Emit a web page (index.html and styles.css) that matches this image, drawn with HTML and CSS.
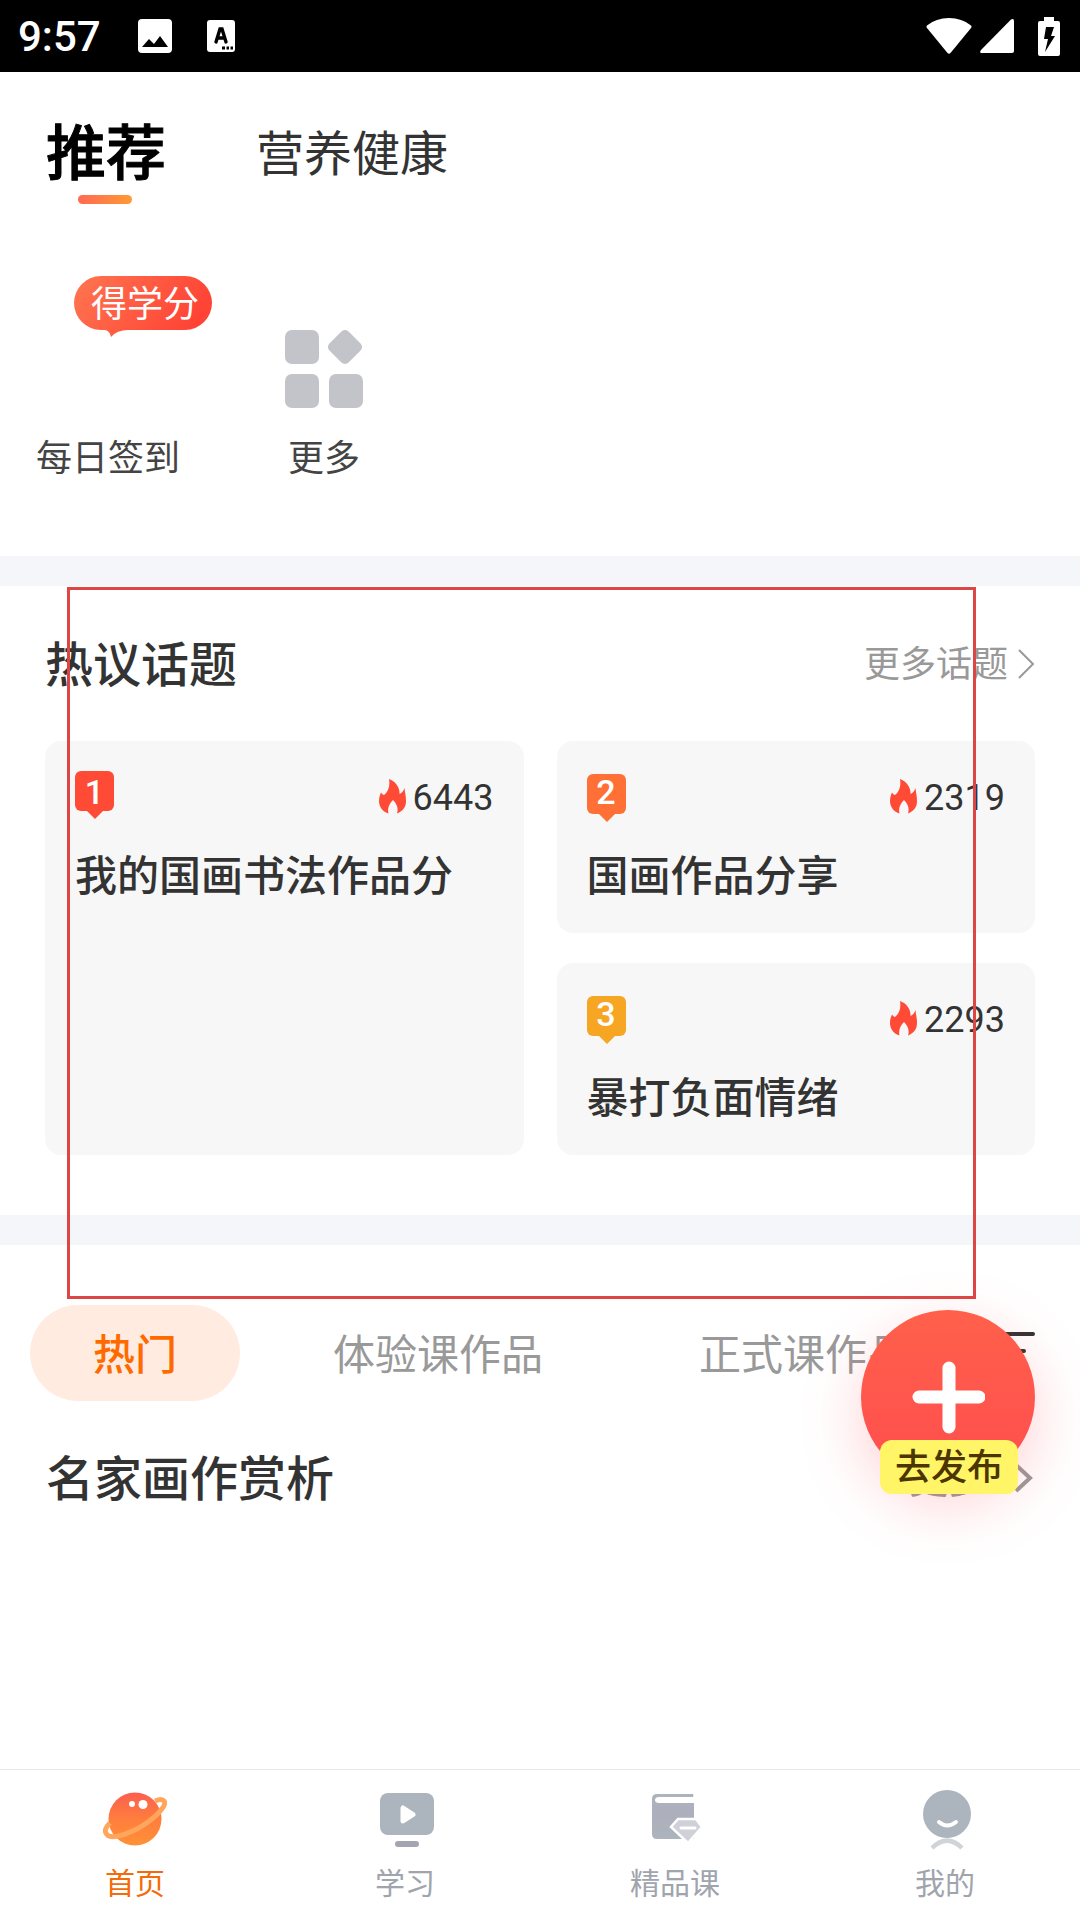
FILE: index.html
```html
<!DOCTYPE html>
<html lang="zh-CN">
<head>
<meta charset="utf-8">
<meta name="viewport" content="width=device-width, initial-scale=1">
<title>推荐</title>
<link rel="stylesheet" href="styles.css">
</head>
<body>
<header class="status">
  <span class="clock">9:57</span>
  <svg class="status-icon" width="34" height="34" viewBox="0 0 34 34"><rect width="34" height="34" rx="4" fill="#fff"/><path d="M4 28L11 20L16 25L22 17L30 28Z" fill="#000"/></svg>
  <svg class="status-icon keyboard" width="28" height="32" viewBox="0 0 28 32"><rect width="28" height="32" rx="3" fill="#fff"/><path d="M9 22L13 9H15L19 22M10.500 18H17.500" fill="none" stroke="#000" stroke-width="3.400" stroke-linecap="round"/><path d="M15 28H18M19.500 28H22M23.500 28H26" stroke="#000" stroke-width="3"/></svg>
  <span class="status-right">
    <svg width="46" height="36" viewBox="0 0 46 36"><path d="M1 7.500Q10 0 23 0T45 7.500Q46 8.500 45 10L24.500 35Q23 36.500 21.500 35L1 10Q0 8.500 1 7.500Z" fill="#fff"/></svg>
    <svg class="signal" width="34" height="34" viewBox="0 0 34 34"><path d="M31 .500Q34-1 34 2V32Q34 34 32 34H1.500Q-1 34 1 31Z" fill="#fff"/></svg>
    <svg class="battery" width="22" height="39" viewBox="0 0 22 39"><path d="M6 0H16V4H20Q22 4 22 6V37Q22 39 20 39H2Q0 39 0 37V6Q0 4 2 4H6Z" fill="#fff"/><path d="M8 10H16L13 19H17L7 35L10 22H6Z" fill="#000"/></svg>
  </span>
</header>
<nav class="channels">
  <a class="channel active" href="#recommend">推荐</a>
  <a class="channel" href="#health">营养健康</a>
</nav>
<main class="content">
  <section class="shortcuts">
    <a class="shortcut" href="#checkin"><span class="shortcut-icon"></span><span>每日签到</span>
      <span class="bubble"><svg class="bubble-shape" width="138" height="61" viewBox="0 0 138 61"><defs><linearGradient id="bubble" x1="0" x2="1" y1="0" y2=".3"><stop offset="0" stop-color="#ff7650"/><stop offset="1" stop-color="#ff4436"/></linearGradient></defs><path d="M27 0H111A27 27 0 0 1 111 54H54Q43 54 37 61Q36 55 31 54H27A27 27 0 0 1 27 0Z" fill="url(#bubble)"/></svg><span class="bubble-text">得学分</span></span>
    </a>
    <a class="shortcut" href="#more"><span class="shortcut-icon"><svg width="78" height="78" viewBox="0 0 78 78" fill="#c3c3ca"><rect width="34" height="34" rx="7"/><rect y="44" width="34" height="34" rx="7"/><rect x="44" y="44" width="34" height="34" rx="7"/><rect x="46.500" y="3.500" width="27" height="27" rx="5" transform="rotate(45 60 17)"/></svg></span><span>更多</span></a>
  </section>
  <section class="topics">
    <div class="section-head">
      <h2>热议话题</h2>
      <a class="more" href="#topics">更多话题<svg width="17" height="30" viewBox="0 0 17 30"><path d="M1 1L15 15L1 29" fill="none" stroke="#999" stroke-width="2"/></svg></a>
    </div>
    <div class="topic-grid">
      <a class="card card-tall" href="#topic1">
        <span class="card-top"><span class="rank rank-1">1</span><span class="heat"><svg width="27" height="36" viewBox="0 0 27 36"><path d="M10 0C16 2 21 8 20.500 15C23 14 24.500 12 25.500 9C26 14 27 17 27 22C27 28 24 32 18 34.500C20 29 17 24 14 21C11 24 8 29 9.500 34.500C4 33 0 28 0 22C0 18 1 16 2 13.500C3 15 4 16 5 16C10 12 11 6 10 0Z" fill="#ff4b36"/></svg>6443</span></span>
        <strong>我的国画书法作品分</strong>
      </a>
      <a class="card" href="#topic2">
        <span class="card-top"><span class="rank rank-2">2</span><span class="heat"><svg width="27" height="36" viewBox="0 0 27 36"><path d="M10 0C16 2 21 8 20.500 15C23 14 24.500 12 25.500 9C26 14 27 17 27 22C27 28 24 32 18 34.500C20 29 17 24 14 21C11 24 8 29 9.500 34.500C4 33 0 28 0 22C0 18 1 16 2 13.500C3 15 4 16 5 16C10 12 11 6 10 0Z" fill="#ff4b36"/></svg>2319</span></span>
        <strong>国画作品分享</strong>
      </a>
      <a class="card" href="#topic3">
        <span class="card-top"><span class="rank rank-3">3</span><span class="heat"><svg width="27" height="36" viewBox="0 0 27 36"><path d="M10 0C16 2 21 8 20.500 15C23 14 24.500 12 25.500 9C26 14 27 17 27 22C27 28 24 32 18 34.500C20 29 17 24 14 21C11 24 8 29 9.500 34.500C4 33 0 28 0 22C0 18 1 16 2 13.500C3 15 4 16 5 16C10 12 11 6 10 0Z" fill="#ff4b36"/></svg>2293</span></span>
        <strong>暴打负面情绪</strong>
      </a>
    </div>
    <div class="frame"></div>
  </section>
  <section class="works">
    <div class="filters">
      <button class="filter selected" type="button">热门</button>
      <button class="filter" type="button">体验课作品</button>
      <button class="filter" type="button">正式课作品</button>
      <button class="menu" type="button" aria-label="筛选"><svg width="42" height="40" viewBox="0 0 42 40"><path d="M2 3H40M2 20H31M2 37H22" stroke="#333" stroke-width="4" stroke-linecap="round"/></svg></button>
    </div>
    <div class="section-head works-head">
      <h2>名家画作赏析</h2>
      <a class="more works-more" href="#works">更多<svg width="21" height="30" viewBox="0 0 21 30"><path d="M2 2L16 15L2 28" fill="none" stroke="#999" stroke-width="4"/></svg></a>
    </div>
  </section>
</main>
<button class="publish" type="button">
  <svg width="74" height="74" viewBox="0 0 74 74"><path d="M38 8V67M8 37H68" stroke="#fff" stroke-width="13" stroke-linecap="round"/></svg>
  <span class="publish-label">去发布</span>
</button>
<nav class="tabbar">
  <a class="tab current" href="#home">
    <svg width="64" height="60" viewBox="0 0 64 60"><defs><linearGradient id="planet" x1="0" x2="0" y1="0" y2="1"><stop offset="0" stop-color="#fb5f50"/><stop offset=".5" stop-color="#ff7d3d"/><stop offset="1" stop-color="#ff9137"/></linearGradient></defs><circle cx="32" cy="29" r="26.500" fill="url(#planet)"/><path d="M52 11C61 7 65 12 58 20C52 28 38 38 27 42C16 47 5 49 3 43C1 40 4 36 7 33" fill="none" stroke="#ffa55c" stroke-width="5"/><circle cx="29" cy="14" r="3" fill="#fff"/><circle cx="40" cy="14.500" r="4.500" fill="#fff"/></svg>
    首页</a>
  <a class="tab" href="#study">
    <svg width="64" height="60" viewBox="0 0 64 60"><rect x="7" y="3" width="54" height="42" rx="8" fill="#acb4bd"/><path d="M30 18V31L40 24.500Z" fill="#fff" stroke="#fff" stroke-width="5" stroke-linejoin="round"/><rect x="22" y="51" width="24" height="6" rx="3" fill="#a3a5b1"/></svg>
    学习</a>
  <a class="tab" href="#courses">
    <svg width="64" height="60" viewBox="0 0 64 60"><defs><linearGradient id="book" x1="0" x2="0" y1="0" y2="1"><stop offset="0" stop-color="#acb4bd"/><stop offset=".4" stop-color="#adafbc"/><stop offset="1" stop-color="#acb4bd"/></linearGradient></defs><path d="M14 4H50Q51 5.500 50 7H16Q12 7 12 10Q12 13 16 13H51V49H14Q9 49 9 44V9Q9 4 14 4Z" fill="url(#book)"/><path d="M35 29H53L59 37L45 53L28 37Z" fill="#d0d1d8" stroke="#fff" stroke-width="2.500"/><path d="M38 38H52" stroke="#fff" stroke-width="3" stroke-linecap="round"/></svg>
    精品课</a>
  <a class="tab" href="#me">
    <svg width="64" height="60" viewBox="0 0 64 60"><circle cx="34" cy="24" r="24" fill="#acb4bd"/><path d="M26 32Q34 39 43 32" fill="none" stroke="#fff" stroke-width="4" stroke-linecap="round"/><path d="M19 58Q34 43 49 58" fill="none" stroke="#d0d3d8" stroke-width="4.500"/></svg>
    我的</a>
</nav>
</body>
</html>
```

FILE: styles.css
```css
* { box-sizing: border-box; }
body {
  margin: 0;
  min-height: 100vh;
  display: flex;
  flex-direction: column;
  background: #fff;
  color: #333;
  font-family: Roboto, "Noto Sans CJK SC", sans-serif;
  font-size: 36px;
}
a { color: inherit; text-decoration: none; }
button { border: 0; padding: 0; background: none; color: inherit; font: inherit; }
svg { display: block; flex: none; }
h2 { margin: 0; font-size: 48px; line-height: 72px; font-weight: 500; }

.status {
  height: 72px;
  padding: 0 20px 0 18px;
  display: flex;
  align-items: center;
  background: #000;
}
.clock { color: #fff; font-size: 42px; font-weight: 500; margin-right: 37px; }
.keyboard { margin-left: 35px; }
.status-right { margin-left: auto; display: flex; align-items: center; }
.signal { margin-left: 8px; }
.battery { margin-left: 24px; }

.channels {
  height: 162px;
  padding: 4px 46px 0;
  display: flex;
  align-items: center;
  gap: 90px;
}
.channel { font-size: 48px; line-height: 72px; }
.channel.active {
  position: relative;
  font-size: 60px;
  font-weight: 500;
  -webkit-text-stroke: 1px currentColor;
  color: #000;
}
.channel.active::after {
  content: "";
  position: absolute;
  left: 32px;
  bottom: -13px;
  width: 54px;
  height: 9px;
  border-radius: 5px;
  background: linear-gradient(90deg, #ff6952, #ff9a35);
}

.content { flex: 1; }
.shortcuts {
  display: grid;
  grid-template-columns: repeat(5, 1fr);
  padding: 93px 0 70px;
  border-bottom: 30px solid #f5f6fa;
}
.shortcut {
  position: relative;
  display: flex;
  flex-direction: column;
  align-items: center;
  gap: 21px;
  line-height: 54px;
  color: #444;
}
.shortcut-icon { height: 84px; display: grid; place-items: center; }
.bubble { position: absolute; left: 74px; top: -51px; color: #fff; }
.bubble-text { position: absolute; left: 0; top: 2px; width: 142px; text-align: center; }

.topics { position: relative; padding: 44px 45px 60px; border-bottom: 30px solid #f5f6fa; }
.section-head { display: flex; align-items: center; justify-content: space-between; }
.more { display: flex; align-items: center; gap: 10px; color: #999; line-height: 54px; margin-bottom: 2px; }
.more svg { margin-bottom: 3px; }
.topic-grid {
  margin-top: 39px;
  display: grid;
  grid-template-columns: 1fr 1fr;
  gap: 30px 33px;
}
.card {
  height: 192px;
  padding: 30px;
  border-radius: 16px;
  background: #f7f7f7;
}
.card-tall { grid-row: span 2; height: auto; }
.card-top { display: flex; justify-content: space-between; align-items: center; height: 54px; }
.card strong {
  display: block;
  margin-top: 20px;
  font-size: 42px;
  line-height: 63px;
  font-weight: 500;
}
.heat { display: flex; align-items: center; gap: 7px; line-height: 54px; }
.heat svg { margin-bottom: 3px; }
.rank {
  position: relative;
  width: 39px;
  height: 40px;
  margin-bottom: 8px;
  border-radius: 6px;
  background: var(--rank);
  color: #fff;
  font-size: 34px;
  line-height: 36px;
  font-weight: 500;
  text-align: center;
}
.rank::after {
  content: "";
  position: absolute;
  left: 12px;
  top: 40px;
  border: 8px solid transparent;
  border-top-color: var(--rank);
  border-bottom: 0;
}
.rank-1 { --rank: #ff4b36; margin-bottom: 14px; line-height: 42px; }
.rank-2 { --rank: #ff7036; }
.rank-3 { --rank: #f6a623; }
.frame {
  position: absolute;
  z-index: 1;
  top: 1px;
  bottom: -84px;
  left: 67px;
  right: 104px;
  border: 3px solid #dc4644;
  pointer-events: none;
}

.works { padding: 60px 45px 0 30px; }
.filters { display: flex; align-items: center; gap: 30px; position: relative; }
.filter {
  flex: none;
  height: 96px;
  padding: 0 63px 4px;
  border-radius: 48px;
  font-size: 42px;
  color: #999;
}
.filter.selected { background: #ffebdf; color: #ff6a00; font-weight: 500; }
.menu { position: absolute; right: 0; top: 26px; background: #fff; }
.works-head { margin-top: 43px; padding-left: 16px; }
.works-more { font-size: 39px; gap: 27px; margin-bottom: 0; }
.works-more svg { margin-bottom: 4px; }

.publish {
  position: fixed;
  z-index: 2;
  right: 45px;
  bottom: 436px;
  width: 174px;
  height: 174px;
  display: grid;
  place-items: center;
  border-radius: 50%;
  background: linear-gradient(#ff604b, #ff4d4e);
  box-shadow: 0 20px 60px rgba(255, 77, 90, 0.26);
}
.publish-label {
  position: absolute;
  left: 19px;
  bottom: -10px;
  width: 138px;
  padding-top: 2px;
  border-radius: 12px;
  background: #fff566;
  color: #4d3500;
  line-height: 52px;
  font-weight: 500;
}

.tabbar {
  display: grid;
  grid-template-columns: repeat(4, 1fr);
  height: 151px;
  border-top: 1px solid #e8e8e8;
  background: #fff;
}
.tab {
  display: flex;
  flex-direction: column;
  align-items: center;
  padding-top: 20px;
  gap: 11px;
  font-size: 30px;
  line-height: 45px;
  color: #a0a4ad;
}
.tab.current { color: #f56a0a; }
```
